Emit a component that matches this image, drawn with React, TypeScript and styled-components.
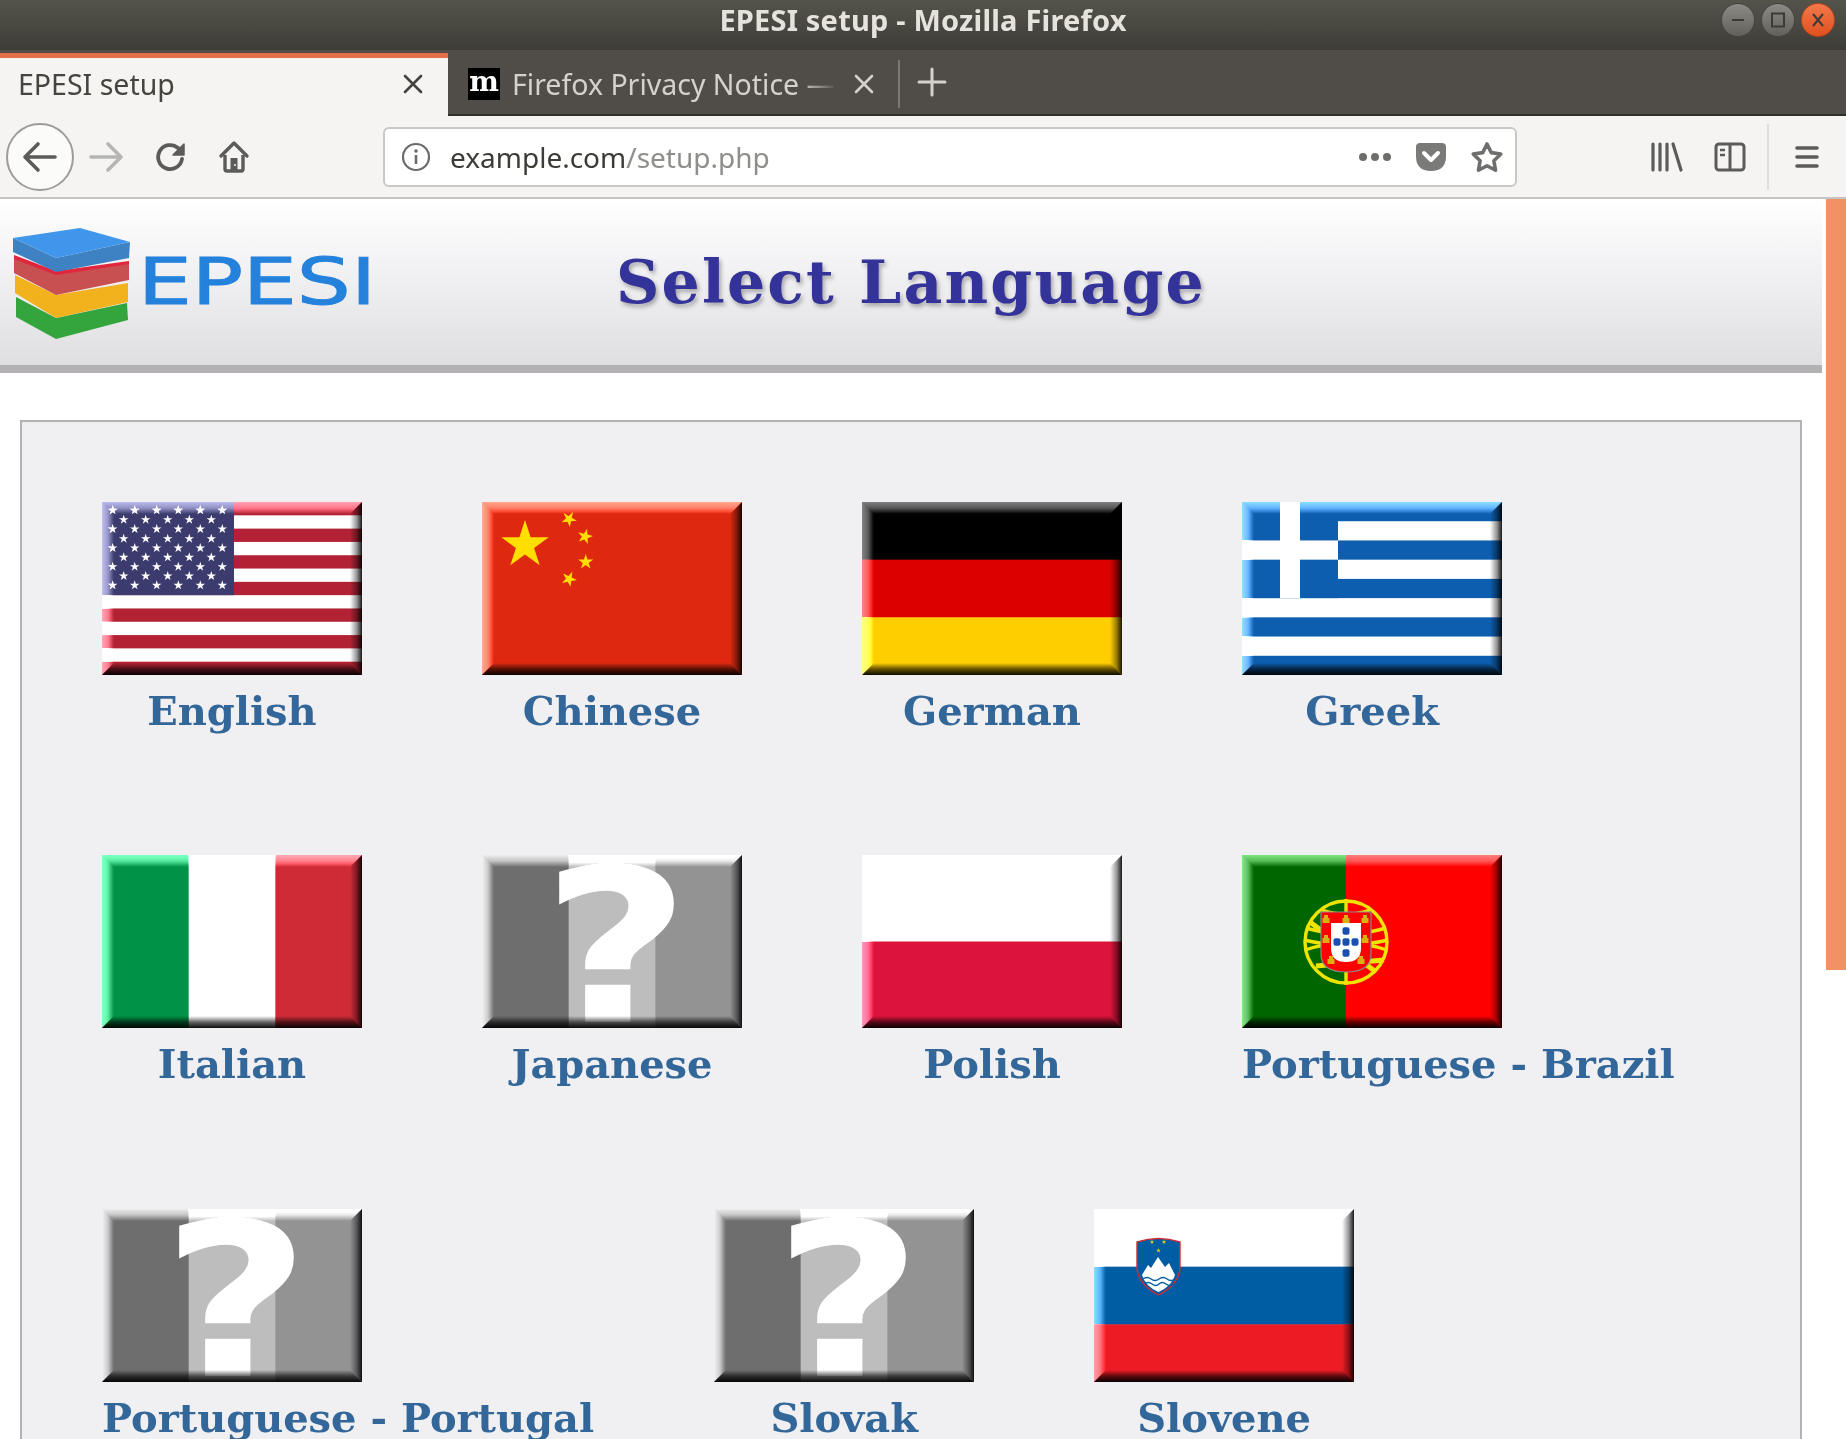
import React, { useId } from "react";
import styled, { createGlobalStyle } from "styled-components";

const Global = createGlobalStyle`
  html, body { margin: 0; padding: 0; height: 100%; background: #fff; overflow: hidden; }
  #root { height: 100%; }
`;

const UI = `"Noto Sans", "Open Sans", sans-serif`;
const SERIF = `"DejaVu Serif", "Liberation Serif", serif`;

const Window = styled.div`
  height: 1439px;
  width: 1846px;
  display: flex;
  flex-direction: column;
  overflow: hidden;
  font-family: ${UI};
`;

const TitleBar = styled.header`
  height: 50px;
  flex: none;
  box-sizing: border-box;
  padding-bottom: 10px;
  background: linear-gradient(#55544b, #3d3c37);
  display: grid;
  grid-template-columns: 1fr auto 1fr;
  align-items: center;
`;

const WindowTitle = styled.div`
  grid-column: 2;
  color: #e6e3dd;
  font-size: 29px;
  line-height: 36px;
  font-weight: 700;
  letter-spacing: 0.2px;
  white-space: nowrap;
`;

const WindowButtons = styled.div`
  grid-column: 3;
  justify-self: end;
  display: flex;
  gap: 6px;
  padding-right: 11px;
`;

const WindowButton = styled.div<{ $close?: boolean }>`
  width: 34px;
  height: 34px;
  border-radius: 50%;
  display: flex;
  align-items: center;
  justify-content: center;
  border: 1px solid ${(p) => (p.$close ? "#b8431a" : "#45443f")};
  box-sizing: border-box;
  background: ${(p) =>
    p.$close ? "linear-gradient(#f2794a, #e0501f)" : "linear-gradient(#8b8a85, #62615c)"};
`;

const TabStrip = styled.nav`
  height: 66px;
  flex: none;
  display: flex;
  background: #504d48;
  border-bottom: 2px solid #2f2e2b;
  box-sizing: border-box;
`;

const ActiveTab = styled.div`
  width: 448px;
  height: 63px;
  margin-top: 3px;
  box-sizing: border-box;
  background: #f5f4f2;
  border-top: 5px solid #e56f49;
  display: flex;
  align-items: center;
  padding: 0 24px 6px 18px;
  justify-content: space-between;
  color: #45443f;
  font-size: 28.5px;
`;

const TabCloseIcon = styled.svg`
  width: 22px;
  height: 22px;
  flex: none;
`;

const Tab = styled.div`
  width: 451px;
  display: flex;
  align-items: center;
  padding: 4px 0 0 20px;
  box-sizing: border-box;
  color: #d5d2cc;
  font-size: 28.5px;
`;

const Favicon = styled.div`
  width: 32px;
  height: 32px;
  background: #000;
  color: #fff;
  font-family: ${SERIF};
  font-weight: 700;
  font-size: 28px;
  line-height: 28px;
  text-align: center;
  flex: none;
  margin-right: 12px;
`;

const TabLabel = styled.div`
  width: 326px;
  white-space: nowrap;
  overflow: hidden;
  -webkit-mask-image: linear-gradient(90deg, #000 88%, transparent);
  mask-image: linear-gradient(90deg, #000 88%, transparent);
  margin-right: 15px;
  flex: none;
`;

const StripSeparator = styled.div`
  width: 2px;
  height: 48px;
  background: #7a7872;
  flex: none;
  margin: 10px 0 0 -1px;
`;

const NewTab = styled.div`
  width: 63px;
  display: flex;
  align-items: center;
  justify-content: center;
`;

const NavBar = styled.div`
  height: 83px;
  flex: none;
  box-sizing: border-box;
  background: #f5f4f2;
  border-bottom: 2px solid #c6c5c3;
  display: flex;
  align-items: center;
  padding-left: 6px;
`;

const BackButton = styled.div`
  width: 68px;
  height: 68px;
  box-sizing: border-box;
  border: 2px solid #9d9c9a;
  border-radius: 50%;
  background: #fbfbfa;
  display: flex;
  align-items: center;
  justify-content: center;
  flex: none;
`;

const NavButton = styled.div<{ $w?: number }>`
  width: ${(p) => p.$w ?? 64}px;
  height: 64px;
  display: flex;
  align-items: center;
  justify-content: center;
  flex: none;
`;

const UrlBar = styled.div`
  width: 1134px;
  height: 60px;
  margin-left: 118px;
  box-sizing: border-box;
  background: #fff;
  border: 2px solid #c9c8c6;
  border-radius: 6px;
  display: flex;
  align-items: center;
  padding-left: 16px;
  flex: none;
`;

const Url = styled.div`
  margin-left: 19px;
  font-size: 28px;
  color: #3c3b37;
  flex: 1;
  white-space: nowrap;
`;

const UrlPath = styled.span`
  color: #8f8e8b;
`;

const Tools = styled.div`
  display: flex;
  align-items: center;
  margin-left: 118px;
`;

const ToolSeparator = styled.div`
  width: 2px;
  height: 66px;
  background: #dededc;
  margin: 0 0 0 6px;
`;

const Viewport = styled.div`
  flex: 1;
  display: flex;
  min-height: 0;
  background: #fff;
`;

const Page = styled.main`
  width: 1822px;
  flex: none;
  overflow: hidden;
`;

const Track = styled.div`
  width: 24px;
  flex: none;
  display: flex;
  justify-content: flex-end;
  align-items: flex-start;
`;

const Thumb = styled.div`
  width: 20px;
  height: 771px;
  background: #f19263;
`;

const Header = styled.div`
  height: 174px;
  box-sizing: border-box;
  border-bottom: 8px solid #b3b1b4;
  background: linear-gradient(#ffffff, #f4f3f5 35%, #dfdee0);
  display: grid;
  grid-template-columns: 1fr auto 1fr;
  align-items: center;
`;

const LogoSvg = styled.svg`
  width: 390px;
  height: 166px;
  display: block;
`;

const Title = styled.h1`
  margin: 0;
  font-family: ${SERIF};
  font-weight: 700;
  font-size: 60px;
  color: #333399;
  letter-spacing: 2.2px;
  white-space: nowrap;
  text-shadow: 2px 3px 4px #a4a4a8;
`;

const Panel = styled.section`
  margin: 47px 20px 0;
  border: 2px solid #b3b1b4;
  background: #f0eff1;
  padding: 80px 20px 0;
  height: 1100px;
`;

const Row = styled.div`
  display: flex;
  height: 353.25px;
`;

const Item = styled.a`
  display: block;
  min-width: 260px;
  margin: 0 60px;
`;

const FlagSvg = styled.svg`
  width: 260px;
  height: 173px;
  display: block;
`;

const Label = styled.div`
  font-family: ${SERIF};
  font-weight: 700;
  font-size: 40px;
  line-height: 48px;
  margin-top: 12px;
  letter-spacing: -0.025px;
  text-align: center;
  white-space: nowrap;
  color: #336699;
`;

const Lit = styled.polygon`
  mix-blend-mode: plus-lighter;
`;

const W = 260;
const H = 173;

function star(cx: number, cy: number, r: number, rot = -90, inner = 0.382) {
  const pts: string[] = [];
  for (let i = 0; i < 10; i++) {
    const rad = i % 2 === 0 ? r : r * inner;
    const a = ((rot + i * 36) * Math.PI) / 180;
    pts.push(`${(cx + rad * Math.cos(a)).toFixed(2)},${(cy + rad * Math.sin(a)).toFixed(2)}`);
  }
  return pts.join(" ");
}

function Bevel() {
  const id = useId();
  const b = 12;
  return (
    <g>
      <defs>
        <linearGradient id={`${id}t`} x1="0" y1="0" x2="0" y2="1">
          <stop offset="0" stopColor="#fff" stopOpacity=".5" />
          <stop offset=".5" stopColor="#fff" stopOpacity=".34" />
          <stop offset=".85" stopColor="#fff" stopOpacity=".1" />
          <stop offset="1" stopColor="#fff" stopOpacity="0" />
        </linearGradient>
        <linearGradient id={`${id}l`} x1="0" y1="0" x2="1" y2="0">
          <stop offset="0" stopColor="#fff" stopOpacity=".52" />
          <stop offset=".5" stopColor="#fff" stopOpacity=".36" />
          <stop offset=".85" stopColor="#fff" stopOpacity=".1" />
          <stop offset="1" stopColor="#fff" stopOpacity="0" />
        </linearGradient>
        <linearGradient id={`${id}r`} x1="0" y1="0" x2="1" y2="0">
          <stop offset="0" stopColor="#000" stopOpacity="0" />
          <stop offset=".55" stopColor="#000" stopOpacity=".4" />
          <stop offset="1" stopColor="#000" stopOpacity=".9" />
        </linearGradient>
        <linearGradient id={`${id}b`} x1="0" y1="0" x2="0" y2="1">
          <stop offset="0" stopColor="#000" stopOpacity="0" />
          <stop offset=".5" stopColor="#000" stopOpacity=".6" />
          <stop offset="1" stopColor="#000" stopOpacity=".95" />
        </linearGradient>
      </defs>
      <Lit points={`0,0 ${W},0 ${W - b},${b} ${b},${b}`} fill={`url(#${id}t)`} />
      <Lit points={`0,0 ${b},${b} ${b},${H - b} 0,${H}`} fill={`url(#${id}l)`} />
      <polygon points={`${W},0 ${W},${H} ${W - b},${H - b} ${W - b},${b}`} fill={`url(#${id}r)`} />
      <polygon points={`0,${H} ${W},${H} ${W - b},${H - b} ${b},${H - b}`} fill={`url(#${id}b)`} />
    </g>
  );
}

function Usa() {
  const s = H / 13;
  const xs6 = [10.7, 32.7, 54.7, 76.3, 98.3, 120.3];
  const ys6 = [8.3, 27, 46, 64.7, 83.3];
  const xs5 = [21.7, 43.7, 65.7, 87.3, 109.3];
  const ys5 = [17.7, 36.7, 55.3, 74];
  return (
    <>
      <rect width={W} height={H} fill="#fff" />
      {Array.from({ length: 7 }, (_, i) => (
        <rect key={i} y={i * 2 * s} width={W} height={s} fill="#b22234" />
      ))}
      <rect width={132} height={s * 7} fill="#3c3b6e" />
      {ys6.flatMap((y) => xs6.map((x) => <polygon key={`${x}-${y}`} points={star(x, y, 5)} fill="#fff" />))}
      {ys5.flatMap((y) => xs5.map((x) => <polygon key={`${x}-${y}`} points={star(x, y, 5)} fill="#fff" />))}
    </>
  );
}

function China() {
  return (
    <>
      <rect width={W} height={H} fill="#de2910" />
      <polygon points={star(43, 43, 25)} fill="#ffde00" />
      <polygon points={star(87, 17, 8, -60)} fill="#ffde00" />
      <polygon points={star(103, 34.5, 8, -75)} fill="#ffde00" />
      <polygon points={star(103.7, 60, 8, -90)} fill="#ffde00" />
      <polygon points={star(87, 77, 8, -65)} fill="#ffde00" />
    </>
  );
}

function Bands({ colors }: { colors: string[] }) {
  const h = H / colors.length;
  return (
    <>
      {colors.map((c, i) => (
        <rect key={i} y={i * h} width={W} height={h + 0.5} fill={c} />
      ))}
    </>
  );
}

function Greece() {
  const s = H / 9;
  const blue = "#0d5eaf";
  return (
    <>
      <rect width={W} height={H} fill="#fff" />
      {[0, 2, 4, 6, 8].map((i) => (
        <rect key={i} y={i * s} width={W} height={s} fill={blue} />
      ))}
      <rect width={96} height={s * 5} fill={blue} />
      <rect x={38} width={20} height={s * 5} fill="#fff" />
      <rect y={s * 2} width={96} height={s} fill="#fff" />
    </>
  );
}

function Columns({ colors }: { colors: string[] }) {
  const w = W / colors.length;
  return (
    <>
      {colors.map((c, i) => (
        <rect key={i} x={i * w} width={w + 0.5} height={H} fill={c} />
      ))}
    </>
  );
}

const QuestionMark = styled.text`
  font-family: "DejaVu Sans", sans-serif;
  font-weight: 700;
  font-size: 214px;
  fill: #fff;
`;

function Unknown() {
  return (
    <>
      <Columns colors={["#6f6e6f", "#bebdbe", "#949394"]} />
      <QuestionMark transform="translate(134 167) scale(1.2 1)" textAnchor="middle">?</QuestionMark>
    </>
  );
}

function Portugal() {
  const cx = 104;
  const cy = 87;
  const gold = "#eee400";
  const castles: [number, number][] = [[84, 64], [104, 64], [123, 64], [84, 84], [123, 84], [89, 105], [119, 105]];
  const quinas: [number, number][] = [[104, 76], [95, 87], [104, 87], [113, 87], [104, 98]];
  return (
    <>
      <rect width={104} height={H} fill="#006600" />
      <rect x={104} width={156} height={H} fill="#ff0000" />
      <g fill="none" stroke={gold} strokeWidth="3.4">
        <circle cx={cx} cy={cy} r={41} />
        <path d={`M${cx} ${cy - 43}V${cy + 43}`} />
        <path d={`M${cx - 40} ${cy - 14}Q${cx} ${cy - 2} ${cx + 40} ${cy - 14}`} />
        <path d={`M${cx - 42} ${cy - 2}Q${cx} ${cy + 8} ${cx + 42} ${cy - 2}`} />
        <path d={`M${cx - 41} ${cy + 8}Q${cx} ${cy - 6} ${cx + 41} ${cy + 8}`} />
        <path d={`M${cx - 36} ${cy - 20}L${cx + 30} ${cy + 30}`} strokeWidth="5" />
        <path d={`M${cx - 30} ${cy + 24}L${cx + 38} ${cy + 18}`} strokeWidth="5" />
        <path d={`M${cx - 24} ${cy - 32}Q${cx} ${cy - 24} ${cx + 24} ${cy - 32}`} />
      </g>
      <path d="M79 57H129V99Q129 117 104 117T79 99Z" fill="#ff0000" stroke="#8a8a8a" strokeWidth="1.2" />
      <path d="M89 68H119V93Q119 107 104 107T89 93Z" fill="#fff" />
      {quinas.map(([x, y]) => (
        <rect key={`${x}-${y}`} x={x - 3.5} y={y - 3.8} width={7} height={7.6} rx={2} fill="#1a4fb0" />
      ))}
      {castles.map(([x, y]) => (
        <path key={`${x}-${y}`} d={`M${x - 3.5} ${y + 4}V${y - 1}H${x - 2}V${y - 4}H${x + 2}V${y - 1}H${x + 3.5}V${y + 4}Z`} fill="#d8b010" />
      ))}
    </>
  );
}

function Slovene() {
  return (
    <>
      <Bands colors={["#ffffff", "#005da4", "#ed1c24"]} />
      <path d="M43 33Q64.5 26 86 33V60Q84 76 64.5 86Q45 76 43 60Z" fill="#005da4" stroke="#cf2b35" strokeWidth="1.4" />
      <path d="M48 66L54 56L57 59L64 48L71 58L75 54L81 66Q78 77 64.5 83Q51 77 48 66Z" fill="#fff" />
      <path d="M49 70Q53 67 57 70T65 70T73 70T81 70M51 75Q54 72 58 75T65 75T72 75T79 75" fill="none" stroke="#005da4" strokeWidth="1.4" />
      <polygon points={star(58, 33, 2.4)} fill="#e6c81e" />
      <polygon points={star(70, 33, 2.4)} fill="#e6c81e" />
      <polygon points={star(64.5, 41.5, 2.4)} fill="#e6c81e" />
    </>
  );
}

type Lang = { name: string; art: React.ReactNode };

const rows: Lang[][] = [
  [
    { name: "English", art: <Usa /> },
    { name: "Chinese", art: <China /> },
    { name: "German", art: <Bands colors={["#000000", "#dd0000", "#ffce00"]} /> },
    { name: "Greek", art: <Greece /> },
  ],
  [
    { name: "Italian", art: <Columns colors={["#009246", "#ffffff", "#ce2b37"]} /> },
    { name: "Japanese", art: <Unknown /> },
    { name: "Polish", art: <Bands colors={["#ffffff", "#dc143c"]} /> },
    { name: "Portuguese - Brazil", art: <Portugal /> },
  ],
  [
    { name: "Portuguese - Portugal", art: <Unknown /> },
    { name: "Slovak", art: <Unknown /> },
    { name: "Slovene", art: <Slovene /> },
  ],
];

function Close({ color }: { color: string }) {
  return (
    <TabCloseIcon viewBox="0 0 22 22">
      <path d="M3 3L19 19M19 3L3 19" stroke={color} strokeWidth="2.6" strokeLinecap="round" />
    </TabCloseIcon>
  );
}

const grey = "#5b5b5a";

export default function App() {
  return (
    <Window>
      <Global />
      <TitleBar>
        <WindowTitle>EPESI setup - Mozilla Firefox</WindowTitle>
        <WindowButtons>
          <WindowButton>
            <svg width="18" height="18" viewBox="0 0 18 18"><path d="M3 9H15" stroke="#3c3b37" strokeWidth="2" /></svg>
          </WindowButton>
          <WindowButton>
            <svg width="18" height="18" viewBox="0 0 18 18"><rect x="3" y="2.5" width="12" height="13" fill="none" stroke="#3c3b37" strokeWidth="2" /></svg>
          </WindowButton>
          <WindowButton $close>
            <svg width="16" height="16" viewBox="0 0 16 16"><path d="M3 2L13 14M13 2L3 14" stroke="#3c3b37" strokeWidth="2" /></svg>
          </WindowButton>
        </WindowButtons>
      </TitleBar>

      <TabStrip>
        <ActiveTab>
          EPESI setup
          <Close color="#45443f" />
        </ActiveTab>
        <Tab>
          <Favicon>m</Favicon>
          <TabLabel>Firefox Privacy Notice — Mozilla</TabLabel>
          <Close color="#d5d2cc" />
        </Tab>
        <StripSeparator />
        <NewTab>
          <svg width="30" height="30" viewBox="0 0 30 30">
            <path d="M15 2V28M2 15H28" stroke="#d5d2cc" strokeWidth="3" strokeLinecap="round" />
          </svg>
        </NewTab>
      </TabStrip>

      <NavBar>
        <BackButton>
          <svg width="36" height="32" viewBox="0 0 36 32" fill="none">
            <path d="M33 16H4M16 3L3 16L16 29" stroke={grey} strokeWidth="3.6" strokeLinecap="round" strokeLinejoin="round" />
          </svg>
        </BackButton>
        <NavButton>
          <svg width="36" height="32" viewBox="0 0 36 32" fill="none">
            <path d="M3 16H32M20 3L33 16L20 29" stroke="#b5b5b3" strokeWidth="3.6" strokeLinecap="round" strokeLinejoin="round" />
          </svg>
        </NavButton>
        <NavButton $w={65}>
          <svg width="32" height="32" viewBox="0 0 32 32" fill="none">
            <path d="M27 18A12 12 0 1 1 23 7" stroke={grey} strokeWidth="3.8" strokeLinecap="round" />
            <path d="M29 3V14H18Z" fill={grey} stroke={grey} strokeWidth="1.5" strokeLinejoin="round" />
          </svg>
        </NavButton>
        <NavButton $w={62}>
          <svg width="32" height="34" viewBox="0 0 32 34" fill="none">
            <path d="M3 16L16 3L29 16" stroke={grey} strokeWidth="3.4" strokeLinecap="round" strokeLinejoin="round" />
            <path d="M7 15V29Q7 31 9 31H23Q25 31 25 29V15" stroke={grey} strokeWidth="3.4" />
            <rect x="12.5" y="18" width="7" height="13" fill={grey} />
            <circle cx="17" cy="25" r="1" fill="#f5f4f2" />
          </svg>
        </NavButton>
        <UrlBar>
          <svg width="30" height="30" viewBox="0 0 30 30" fill="none">
            <circle cx="15" cy="15" r="13" stroke="#6b6b6a" strokeWidth="2.2" />
            <circle cx="15" cy="9" r="1.8" fill="#6b6b6a" />
            <path d="M15 13V22" stroke="#6b6b6a" strokeWidth="2.6" />
          </svg>
          <Url>
            example.com<UrlPath>/setup.php</UrlPath>
          </Url>
          <NavButton $w={56}>
            <svg width="34" height="10" viewBox="0 0 34 10">
              <circle cx="5" cy="5" r="4" fill="#6e6e6d" />
              <circle cx="17" cy="5" r="4" fill="#6e6e6d" />
              <circle cx="29" cy="5" r="4" fill="#6e6e6d" />
            </svg>
          </NavButton>
          <NavButton $w={56}>
            <svg width="32" height="30" viewBox="0 0 32 30">
              <path d="M1 5Q1 1 5 1H27Q31 1 31 5V14Q31 29 16 29T1 14Z" fill="#7a7a79" />
              <path d="M9 11L16 18L23 11" fill="none" stroke="#fff" strokeWidth="4" strokeLinecap="round" strokeLinejoin="round" />
            </svg>
          </NavButton>
          <NavButton $w={56}>
            <svg width="34" height="32" viewBox="0 0 34 32">
              <polygon points={star(17, 17.5, 14.5, -90, 0.5)} fill="none" stroke="#6e6e6d" strokeWidth="3.6" strokeLinejoin="round" />
            </svg>
          </NavButton>
        </UrlBar>
        <Tools>
          <NavButton $w={64}>
            <svg width="32" height="30" viewBox="0 0 32 30" fill="none" stroke={grey} strokeWidth="3.2" strokeLinecap="round">
              <path d="M2 2V28M9 2V28M16 2V28M22 2L30 28" />
            </svg>
          </NavButton>
          <NavButton $w={62}>
            <svg width="32" height="30" viewBox="0 0 32 30" fill="none">
              <rect x="2" y="2" width="28" height="26" rx="3" stroke={grey} strokeWidth="3" />
              <path d="M16 2V28" stroke={grey} strokeWidth="3" />
              <path d="M6 8H11M6 13H11" stroke={grey} strokeWidth="2.6" />
            </svg>
          </NavButton>
          <ToolSeparator />
          <NavButton $w={76}>
            <svg width="26" height="26" viewBox="0 0 26 26" stroke={grey} strokeWidth="3.6" strokeLinecap="round">
              <path d="M3 4H23M3 13H23M3 22H23" />
            </svg>
          </NavButton>
        </Tools>
      </NavBar>

      <Viewport>
        <Page>
          <Header>
            <LogoSvg viewBox="0 0 390 166">
              <polygon points="16,98 56,119 127,104 128,121 56,140 16,118" fill="#34a53d" />
              <polygon points="15,76 56,96 128,84 128,103 56,119 15,94" fill="#f2b21e" />
              <polygon points="14,58 56,73 129,64 129,81 56,96 14,74" fill="#c85050" />
              <polygon points="14,56 56,72 129,62 129,65 56,76 14,60" fill="#e0263c" />
              <polygon points="13,39 56,59 56,73 13,53" fill="#3f82c4" />
              <polygon points="56,59 130,43 129,59 56,73" fill="#3f82c4" />
              <polygon points="13,39 80,29 130,43 56,59" fill="#3f96ea" />
              <text x="138" y="105" fontFamily="DejaVu Sans, sans-serif" fontSize="64" fill="#2482dc" stroke="#2482dc" strokeWidth="1" textLength="238" lengthAdjust="spacingAndGlyphs">EPESI</text>
            </LogoSvg>
            <Title>Select Language</Title>
          </Header>
          <Panel>
            {rows.map((row) => (
              <Row key={row[0].name}>
                {row.map((l) => (
                  <Item key={l.name}>
                    <FlagSvg viewBox={`0 0 ${W} ${H}`}>
                      {l.art}
                      <Bevel />
                    </FlagSvg>
                    <Label>{l.name}</Label>
                  </Item>
                ))}
              </Row>
            ))}
          </Panel>
        </Page>
        <Track>
          <Thumb />
        </Track>
      </Viewport>
    </Window>
  );
}
